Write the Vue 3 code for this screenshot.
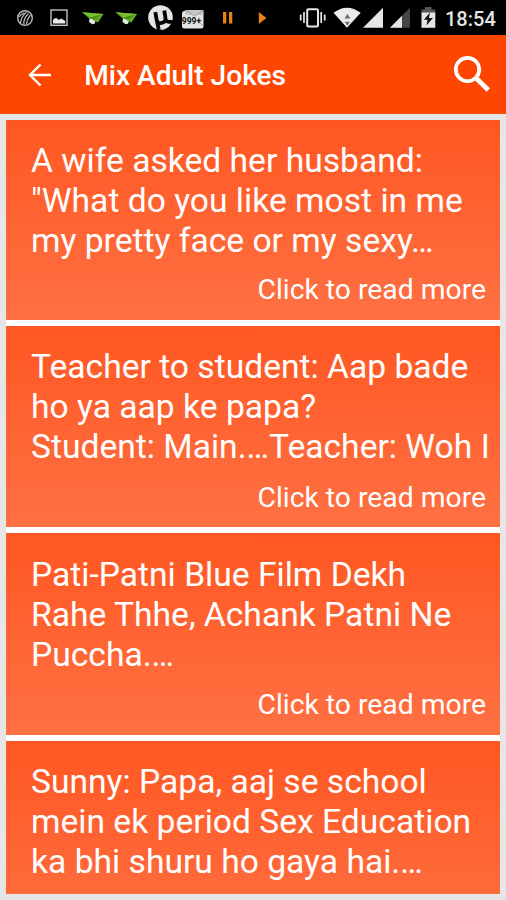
<script setup>
const jokes = [
  { lines: ['A wife asked her husband:', '"What do you like most in me', 'my pretty face or my sexy…'], more: true },
  { lines: ['Teacher to student: Aap bade', 'ho ya aap ke papa?', 'Student: Main.…Teacher: Woh I'], more: true },
  { lines: ['Pati-Patni Blue Film Dekh', 'Rahe Thhe, Achank Patni Ne', 'Puccha.…'], more: true },
  { lines: ['Sunny: Papa, aaj se school', 'mein ek period Sex Education', 'ka bhi shuru ho gaya hai.…'], more: false },
]
</script>

<template>
  <div class="screen">
    <header class="status">
      <svg class="icons" width="440" height="35" viewBox="0 0 440 35" aria-hidden="true">
        <g fill="none" stroke="#b5b5b5" stroke-width="1.3">
          <circle cx="25" cy="18" r="7.3" stroke-width="1.5" />
          <path d="M19 17Q21 14 24 13M20.500 23Q21 17 26.500 12M24 24.500Q23 19 28.500 13.500M26.500 24Q27 19 30.500 15" />
          <rect x="51" y="10" width="16" height="15.300" stroke="#d0d0d0" />
        </g>
        <path d="M53 23.500v-3.800l3-2 3 2.400 2.200-1.600 4 2.500v2.500z" fill="#ececec" />
        <g v-for="x in [0, 33.5]" :key="x" :transform="`translate(${x} 0)`">
          <path d="M82 12.300L103.500 14 98 22.500 89 18.200z" fill="#62ab20" />
          <path d="M82 12.300L103.500 14 91 17.500z" fill="#79bd32" />
          <path d="M89 18.200l1.800-.8L101 14.800l-7 4.700z" fill="#468b18" />
          <path d="M89.500 18.500l3 .7 3 2.300-1 2.300-2.300.4-3.200-2.200z" fill="#e4eadf" />
        </g>
        <circle cx="160.500" cy="17.500" r="12.300" fill="#e4e4e4" />
        <path d="M155.300 12.200l1.500 8.300q.7 3 3.700 2.600 5.300-.6 5-4.600L164.300 10.500M165.300 18.500q.5 3.300 3.500 3.300h4M157 21l1.800 8.800" fill="none" stroke="#050505" stroke-width="3.800" />
        <rect x="182" y="11" width="21.500" height="17.500" rx="2.500" fill="#e2e2e2" />
        <path d="M185 10h18.500v5h-18.500z" fill="#c6c6c6" />
        <path d="M186 10.500l8.500 5.500 8.500-5.500M198 21l5 5" fill="none" stroke="#909090" stroke-width=".8" />
        <text x="181.800" y="24" class="count">999+</text>
        <path d="M223 12h3.300v11.500H223zM229 12h3.300v11.500H229zM258.800 12l7.700 6-7.700 6z" fill="#e58213" />
        <g fill="none" stroke="#e7e7e7">
          <rect x="307.200" y="9.200" width="10.800" height="17.300" rx="1.200" stroke-width="2" />
          <path d="M304 12v11M321.200 12v11M300.700 14.500v6M324.700 14.500v6" stroke-width="1.700" />
        </g>
        <path d="M333.500 12.800Q347 2.500 360.700 12.800L347 27.700z" fill="#ebebeb" />
        <path d="M347.400 14l3 4.500h-6zM344.700 21.800h5.300l-2.700 4z" fill="#6b6b6b" />
        <path d="M383 7.800v20h-20z" fill="#e6e6e6" />
        <path d="M410 7.800v20h-20z" fill="#464646" />
        <path d="M402 15.800v12h-12z" fill="#e6e6e6" />
        <path d="M425 7h6.500v4H425z" fill="#555" />
        <path d="M421.500 9.500h13.800v4h-13.800z" fill="#555" />
        <path d="M421.500 12.500h13.800v15.300h-13.800z" fill="#e6e6e6" />
        <path d="M430 12.500l-6.200 7.200h3.700l-1 5.800 6.400-7.500h-4z" fill="#111" />
      </svg>
      <span class="clock">18:54</span>
    </header>
    <nav class="bar">
      <svg class="back" width="24" height="24" viewBox="0 0 24 24"><path d="M23 12H2.500M12.500 1.500L2 12l10.500 10.500" fill="none" stroke="#fff" stroke-width="2.400" /></svg>
      <h1 class="title">Mix Adult Jokes</h1>
      <svg class="search" width="38" height="38" viewBox="0 0 38 38"><circle cx="14.500" cy="14.500" r="11.700" fill="none" stroke="#fff" stroke-width="3.800" /><path d="M23.500 23.500L35.300 35" stroke="#fff" stroke-width="4.600" /></svg>
    </nav>
    <main class="body">
      <div class="list">
        <article v-for="(joke, i) in jokes" :key="i" class="card">
          <p class="text"><span v-for="line in joke.lines" :key="line" class="line">{{ line }}</span></p>
          <p v-if="joke.more" class="more">Click to read more</p>
        </article>
      </div>
    </main>
  </div>
</template>

<style>
body { margin: 0; }
</style>
<style scoped>
.screen { width: 506px; height: 900px; display: flex; flex-direction: column; overflow: hidden; background: #e6e6e6; font-family: Roboto, sans-serif; color: #fff; }
.status { height: 35px; background: #000; display: flex; flex: none; }
.icons { flex: none; }
.count { font: 700 8.500px Roboto, sans-serif; fill: #111; }
.clock { padding-left: 5px; font-size: 20px; font-weight: 500; line-height: 38px; color: #e5e5e5; }
.bar { height: 79px; flex: none; box-sizing: border-box; background: #ff4600; display: flex; align-items: center; padding: 0 15px 0 27.500px; }
.back { flex: none; }
.title { margin: 3px 0 0 32.700px; flex: 1; font-size: 28.100px; font-weight: 500; line-height: 34px; white-space: nowrap; }
.search { flex: none; margin-bottom: 1px; }
.body { padding: 6px; flex: 1; min-height: 0; display: flex; }
.list { flex: 1; min-width: 0; overflow: hidden; background: #fff; display: flex; flex-direction: column; gap: 6px; }
.card { flex: none; height: 201.400px; box-sizing: border-box; padding: 21.400px 13px 0 25px; background: linear-gradient(#ff5722, #ff7043); }
.card:first-child { height: 200px; padding-top: 20.600px; }
.text, .more { margin: 0; }
.line { display: block; font-size: 33.620px; line-height: 40px; white-space: nowrap; }
.card:first-child .line:last-child { line-height: 39px; }
.more { margin-top: 13.700px; padding-right: 1px; text-align: right; font-size: 28.300px; line-height: 34px; white-space: nowrap; }
</style>
